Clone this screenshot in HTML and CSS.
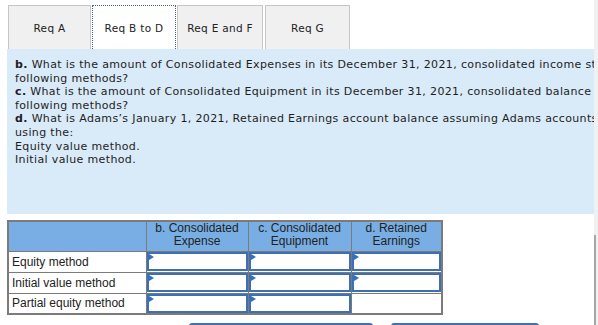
FILE: index.html
```html
<!DOCTYPE html>
<html>
<head>
    <link rel="stylesheet" href="styles.css">
</head>
<body>
    <div class="page">
        <div class="tabs">
            <div class="tab tab-a">Req A</div>
            <div class="tab tab-bd active">Req B to D</div>
            <div class="tab tab-ef">Req E and F</div>
            <div class="tab tab-g">Req G</div>
        </div>

        <div class="question">
            <p><strong>b.</strong> What is the amount of Consolidated Expenses in its December 31, 2021, consolidated income statement using the<br>following methods?</p>
            <p><strong>c.</strong> What is the amount of Consolidated Equipment in its December 31, 2021, consolidated balance sheet using the<br>following methods?</p>
            <p><strong>d.</strong> What is Adams’s January 1, 2021, Retained Earnings account balance assuming Adams accounts for its<br>using the:</p>
            <p>Equity value method.</p>
            <p>Initial value method.</p>
        </div>

        <table class="answers">
            <tr class="head">
                <th class="col-label"></th>
                <th class="col-b">b. Consolidated<br>Expense</th>
                <th class="col-c">c. Consolidated<br>Equipment</th>
                <th class="col-d">d. Retained<br>Earnings</th>
            </tr>
            <tr>
                <td class="label">Equity method</td>
                <td class="entry"><div class="box"></div></td>
                <td class="entry"><div class="box"></div></td>
                <td class="entry"><div class="box"></div></td>
            </tr>
            <tr>
                <td class="label">Initial value method</td>
                <td class="entry"><div class="box"></div></td>
                <td class="entry"><div class="box"></div></td>
                <td class="entry"><div class="box"></div></td>
            </tr>
            <tr>
                <td class="label">Partial equity method</td>
                <td class="entry"><div class="box"></div></td>
                <td class="entry"><div class="box"></div></td>
                <td class="blank"></td>
            </tr>
        </table>

        <div class="nav">
            <div class="nav-btn prev"></div>
            <div class="nav-btn next"></div>
        </div>
    </div>

    <div class="scrollbar"><div class="thumb"></div></div>
</body>
</html>
```

FILE: styles.css
```css
* {
    margin: 0;
    padding: 0;
    box-sizing: border-box;
}

body {
    font-family: Verdana, 'DejaVu Sans', sans-serif;
    background-color: white;
    color: #222;
    overflow: hidden;
    width: 598px;
    height: 325px;
}

.page {
    padding: 5px 0 0 7px;
}

/* Tabs */
.tabs {
    display: flex;
    height: 44px;
    padding-left: 1px;
}

.tab {
    display: flex;
    justify-content: center;
    align-items: center;
    height: 44px;
    font-size: 10.5px;
    letter-spacing: 0.3px;
    color: #222;
    background-color: #f0f0f0;
    border: 1px solid #c6c6c6;
    border-bottom: none;
}

.tab-a { width: 83px; margin-right: 1px; }
.tab-bd { width: 84px; margin-right: 1px; }
.tab-ef { width: 86px; margin-right: 2px; }
.tab-g { width: 85px; }

.tab.active {
    background-color: white;
    border: 1px dotted #4c5e86;
    border-bottom: none;
}

/* Question panel */
.question {
    width: 587px;
    height: 165px;
    background-color: #d9eaf8;
    padding: 9px 0 0 8px;
    overflow: hidden;
    font-size: 11px;
    letter-spacing: 0.36px;
    line-height: 13.6px;
    color: #1e1e1e;
}

.question p {
    white-space: nowrap;
}

/* Answer table */
.answers {
    margin-top: 6px;
    border-collapse: collapse;
    font-family: Arial, 'Liberation Sans', sans-serif;
    font-size: 12px;
    table-layout: fixed;
    border: 2px solid #7b7b7b;
}

.answers th,
.answers td {
    border: 1px solid #7b7b7b;
}

.head th {
    background-color: #78aee3;
    height: 30px;
    font-weight: normal;
    line-height: 13px;
    color: #222;
    vertical-align: middle;
    padding-bottom: 2px;
}

.col-label { width: 138px; }
.col-b { width: 102px; }
.col-c { width: 103px; }
.col-d { width: 91px; }

.answers td {
    height: 21px;
}

.label {
    padding-left: 3px;
    color: #222;
}

.entry {
    padding: 0;
    position: relative;
}

.box {
    height: 19px;
    border: 2px solid #3d6fb2;
    background-color: white;
}

.entry::before {
    content: '';
    position: absolute;
    left: 2px;
    top: 2px;
    border-top: 3px solid transparent;
    border-bottom: 3px solid transparent;
    border-left: 5px solid #2f6fc6;
}

/* Bottom buttons */
.nav {
    display: flex;
    margin-top: 8px;
    padding-left: 182px;
    gap: 18px;
}

.nav-btn {
    height: 3px;
    border-radius: 3px 3px 0 0;
    background-color: #3d70b4;
}

.prev { width: 184px; }
.next { width: 148px; }

/* Scrollbar strip */
.scrollbar {
    position: fixed;
    top: 0;
    right: 0;
    width: 4px;
    height: 325px;
    background-color: #f1f1f1;
}

.thumb {
    position: absolute;
    top: 235px;
    left: 0;
    width: 2px;
    height: 90px;
    background-color: #a6a6a6;
}
```
